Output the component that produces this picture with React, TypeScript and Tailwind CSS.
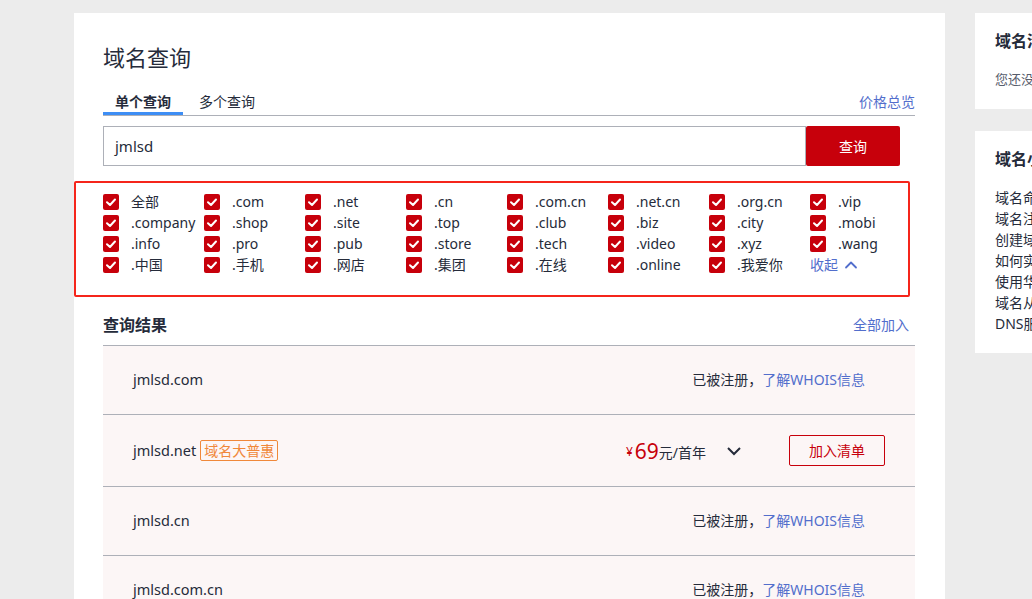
import React from "react";

const tlds = [
  "全部", ".com", ".net", ".cn", ".com.cn", ".net.cn", ".org.cn", ".vip",
  ".company", ".shop", ".site", ".top", ".club", ".biz", ".city", ".mobi",
  ".info", ".pro", ".pub", ".store", ".tech", ".video", ".xyz", ".wang",
  ".中国", ".手机", ".网店", ".集团", ".在线", ".online", ".我爱你",
];

function Check() {
  return (
    <span className="w-[16px] h-[16px] rounded-[2px] bg-[#c7000b] flex items-center justify-center shrink-0">
      <svg width="16" height="16" viewBox="0 0 16 16">
        <polyline points="4,8.2 7,11 12,5.5" fill="none" stroke="#fff" strokeWidth="2" strokeLinecap="round" strokeLinejoin="round" />
      </svg>
    </span>
  );
}

function Whois() {
  return (
    <div className="text-[14px] leading-[20px] text-[#252b3a] mr-[20px]">
      已被注册，<span className="text-[#526ecc]">了解WHOIS信息</span>
    </div>
  );
}

export default function App() {
  const font = { fontFamily: '"Noto Sans", "Noto Sans CJK SC", sans-serif' };
  return (
    <div
      className="w-[1032px] h-[599px] overflow-hidden bg-[#ececec] flex items-start pt-[13px] pl-[74px] gap-[30px]"
      style={font}
    >
      {/* main card */}
      <div className="w-[871px] shrink-0 bg-white pl-[29px] pr-[30px] pt-[28px] pb-[40px]">
        <div className="text-[22px] leading-[32px] text-[#252b3a]">域名查询</div>

        {/* tabs */}
        <div className="mt-[18px] flex items-end border-b border-[#adb0b8] relative">
          <div className="w-[80px] flex flex-col items-center">
            <span className="text-[14px] leading-[21px] font-bold text-[#252b3a]">单个查询</span>
            <span className="w-full h-[3px] bg-[#3d8ef5]"></span>
          </div>
          <div className="pl-[16px] text-[14px] leading-[21px] text-[#252b3a] mb-[3px]">多个查询</div>
          <div className="ml-auto text-[14px] leading-[21px] text-[#526ecc] mb-[3px]">价格总览</div>
        </div>

        {/* search */}
        <div className="mt-[10px] flex h-[40px]">
          <div className="w-[703px] h-full border border-[#adb0b8] flex items-center pl-[11px] text-[15px] text-[#252b3a]">
            jmlsd
          </div>
          <div className="w-[94px] h-full bg-[#c7000b] rounded-[2px] flex items-center justify-center text-white text-[14px]">
            查询
          </div>
        </div>

        {/* tld box */}
        <div className="mt-[15px] ml-[-29px] w-[836px] border-2 border-[#f5251b] rounded-[2px] pl-[27px] pt-[8px] pb-[20px]">
          <div className="grid grid-cols-[repeat(8,101px)]">
            {tlds.map((t) => (
              <div key={t} className="h-[21px] flex items-center">
                <Check />
                <span className="ml-[12px] text-[14px] leading-[21px] text-[#252b3a] whitespace-nowrap">{t}</span>
              </div>
            ))}
            <div className="h-[21px] flex items-center text-[14px] text-[#526ecc]">
              收起
              <svg width="14" height="14" viewBox="0 0 14 14" className="ml-[6px]">
                <polyline points="2,9.5 7,4.5 12,9.5" fill="none" stroke="#526ecc" strokeWidth="1.8" strokeLinecap="round" strokeLinejoin="round" />
              </svg>
            </div>
          </div>
        </div>

        {/* results */}
        <div className="pt-[17px] pb-[9px] flex items-center border-b border-[#adb0b8]">
          <span className="text-[16px] leading-[22px] font-bold text-[#252b3a]">查询结果</span>
          <span className="ml-auto mr-[6px] text-[14px] leading-[22px] text-[#526ecc]">全部加入</span>
        </div>

        <div className="h-[69px] bg-[#fcf6f6] border-b border-[#adb0b8] flex items-center pl-[30px] pr-[30px]">
          <span className="text-[14.5px] text-[#252b3a]">jmlsd.com</span>
          <div className="ml-auto"><Whois /></div>
        </div>

        <div className="h-[72px] bg-[#fcf6f6] border-b border-[#adb0b8] flex items-center pl-[30px] pr-[30px]">
          <span className="text-[14.5px] text-[#252b3a]">jmlsd.net</span>
          <span className="ml-[4px] h-[21px] px-[3px] border border-[#f0883a] rounded-[2px] text-[14px] leading-[19px] text-[#f0883a]">
            域名大普惠
          </span>
          <div className="ml-auto flex items-center">
            <span className="text-[12px] text-[#c7000b] mr-[2px] mt-[3px]">¥</span>
            <span className="text-[21px] leading-[24px] text-[#c7000b]">69</span>
            <span className="text-[14px] text-[#252b3a] mt-[3px]">元/首年</span>
            <svg width="16" height="16" viewBox="0 0 16 16" className="ml-[20px]">
              <polyline points="2,5 8,11 14,5" fill="none" stroke="#252b3a" strokeWidth="2" strokeLinejoin="miter" />
            </svg>
            <div className="ml-[47px] w-[96px] h-[31px] border border-[#c7000b] rounded-[2px] flex items-center justify-center text-[14px] text-[#c7000b]">
              加入清单
            </div>
          </div>
        </div>

        <div className="h-[69px] bg-[#fcf6f6] border-b border-[#adb0b8] flex items-center pl-[30px] pr-[30px]">
          <span className="text-[14.5px] text-[#252b3a]">jmlsd.cn</span>
          <div className="ml-auto"><Whois /></div>
        </div>

        <div className="h-[69px] bg-[#fcf6f6] border-b border-[#adb0b8] flex items-center pl-[30px] pr-[30px]">
          <span className="text-[14.5px] text-[#252b3a]">jmlsd.com.cn</span>
          <div className="ml-auto"><Whois /></div>
        </div>
      </div>

      {/* sidebar */}
      <div className="w-[240px] shrink-0 flex flex-col gap-[22px]">
        <div className="h-[96px] bg-white pl-[20px] pt-[17px]">
          <div className="text-[16px] leading-[22px] font-bold text-[#252b3a] whitespace-nowrap">域名清单</div>
          <div className="mt-[17px] text-[13px] leading-[20px] text-[#575d6c] whitespace-nowrap">您还没有添加域名</div>
        </div>
        <div className="h-[222px] bg-white pl-[20px] pt-[17px]">
          <div className="text-[16px] leading-[22px] font-bold text-[#252b3a] whitespace-nowrap">域名小知识</div>
          <div className="mt-[17px] flex flex-col text-[14px] leading-[21px] text-[#252b3a] whitespace-nowrap">
            <span>域名命名规则</span>
            <span>域名注册流程</span>
            <span>创建域名信息模板</span>
            <span>如何实名认证</span>
            <span>使用华为云解析</span>
            <span>域名从其他服务商转入</span>
            <span>DNS服务器</span>
          </div>
        </div>
      </div>
    </div>
  );
}
